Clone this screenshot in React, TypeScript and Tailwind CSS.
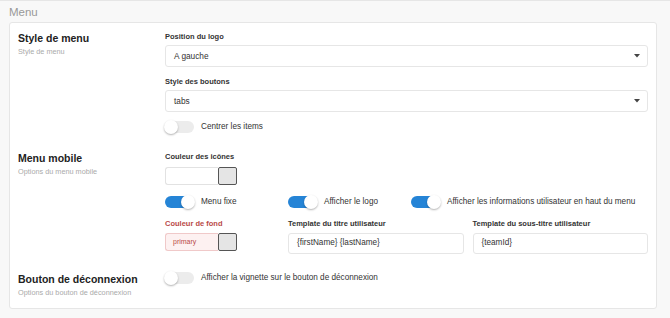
import React from "react";

function Toggle({ on, label }: { on?: boolean; label: string }) {
  return (
    <div className="flex items-center whitespace-nowrap">
      <div
        className={`relative h-[12px] w-[29px] shrink-0 rounded-full ${
          on ? "bg-[#2584d6]" : "bg-[#ececec]"
        }`}
      >
        <div
          className={`absolute top-[-1px] h-[14px] w-[14px] rounded-full bg-white shadow-[0_1px_2px_rgba(0,0,0,0.3)] ${
            on ? "right-[-1px]" : "left-[-1px]"
          }`}
        />
      </div>
      <span className="ml-[7px] text-[8.2px] leading-[12px] text-[#333]">{label}</span>
    </div>
  );
}

function Select({ value }: { value: string }) {
  return (
    <div className="flex h-[22px] items-center justify-between rounded-[3px] border border-[#e6e6e6] bg-white pl-[8px] pr-[7px]">
      <span className="text-[8.3px] text-[#333]">{value}</span>
      <svg width="6" height="4" viewBox="0 0 6 4">
        <path d="M0 0h6L3 3.5z" fill="#444" />
      </svg>
    </div>
  );
}

function ColorInput({ value, error }: { value?: string; error?: boolean }) {
  return (
    <div className="flex h-[18px] w-[72px]">
      <div
        className={`flex flex-1 items-center rounded-l-[3px] border border-r-0 pl-[7px] text-[7px] font-normal ${
          error ? "border-[#f0c9c9] bg-[#fdf1f1] text-[#b94a48]" : "border-[#e2e2e2] bg-white"
        }`}
      >
        {value}
      </div>
      <div className="w-[19px] rounded-[2px] border border-[#555] bg-[#e5e5e5]" />
    </div>
  );
}

function Label({ children, error }: { children: React.ReactNode; error?: boolean }) {
  return (
    <div
      className={`whitespace-nowrap text-[7.5px] font-bold leading-[12px] ${
        error ? "text-[#b94a48]" : "text-[#333]"
      }`}
    >
      {children}
    </div>
  );
}

function SectionHead({ title, sub }: { title: string; sub: string }) {
  return (
    <div className="w-[147px] shrink-0">
      <div className="text-[10.5px] font-bold leading-[14px] text-[#222]">{title}</div>
      <div className="text-[7.3px] leading-[14px] text-[#aaa]">{sub}</div>
    </div>
  );
}

function TextInput({ value }: { value: string }) {
  return (
    <div className="mt-[3px] flex h-[21px] items-center rounded-[3px] border border-[#e6e6e6] pl-[8px] text-[8.2px] text-[#333]">
      {value}
    </div>
  );
}

export default function App() {
  return (
    <div
      className="h-[318px] w-[670px] border-t border-[#e6e6e6] bg-[#f8f8f8] pl-[9px]"
      style={{ fontFamily: '"Liberation Sans", Arial, sans-serif' }}
    >
      <div className="pt-[3px] text-[11.5px] leading-[17px] text-[#999]">Menu</div>
      <div className="mt-[1px] h-[287px] w-[648px] rounded-[3px] border border-[#e6e6e6] bg-white pl-[8px] pr-[8px] pt-[8px]">
        <div className="flex">
          <SectionHead title="Style de menu" sub="Style de menu" />
          <div className="flex-1">
            <Label>Position du logo</Label>
            <div className="mt-[2px]">
              <Select value="A gauche" />
            </div>
            <div className="mt-[9px]">
              <Label>Style des boutons</Label>
            </div>
            <div className="mt-[2px]">
              <Select value="tabs" />
            </div>
            <div className="mt-[9px]">
              <Toggle label="Centrer les items" />
            </div>
          </div>
        </div>

        <div className="mt-[18px] flex">
          <SectionHead title="Menu mobile" sub="Options du menu mobile" />
          <div className="flex-1">
            <Label>Couleur des icônes</Label>
            <div className="mt-[4px]">
              <ColorInput />
            </div>
            <div className="mt-[11px] flex">
              <div className="w-[123px]">
                <Toggle on label="Menu fixe" />
              </div>
              <div className="w-[123px]">
                <Toggle on label="Afficher le logo" />
              </div>
              <Toggle on label="Afficher les informations utilisateur en haut du menu" />
            </div>
            <div className="mt-[10px] flex gap-[9px]">
              <div className="w-[114px]">
                <Label error>Couleur de fond</Label>
                <div className="mt-[3px]">
                  <ColorInput value="primary" error />
                </div>
              </div>
              <div className="flex-1">
                <Label>Template du titre utilisateur</Label>
                <TextInput value="{firstName} {lastName}" />
              </div>
              <div className="flex-1">
                <Label>Template du sous-titre utilisateur</Label>
                <TextInput value="{teamId}" />
              </div>
            </div>
          </div>
        </div>

        <div className="mt-[18px] flex">
          <SectionHead title="Bouton de déconnexion" sub="Options du bouton de déconnexion" />
          <div className="flex-1">
            <Toggle label="Afficher la vignette sur le bouton de déconnexion" />
          </div>
        </div>
      </div>
    </div>
  );
}
